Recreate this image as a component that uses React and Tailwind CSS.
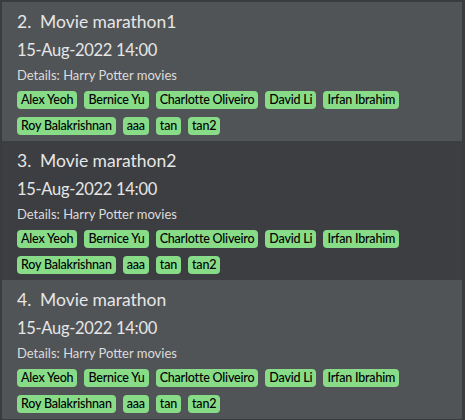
const tags = [
  "Alex Yeoh",
  "Bernice Yu",
  "Charlotte Oliveiro",
  "David Li",
  "Irfan Ibrahim",
  "Roy Balakrishnan",
  "aaa",
  "tan",
  "tan2",
];

const events = [
  { index: 2, name: "Movie marathon1", bg: "bg-[#505457]" },
  { index: 3, name: "Movie marathon2", bg: "bg-[#3c3e41]" },
  { index: 4, name: "Movie marathon", bg: "bg-[#505457]" },
];

function EventCard({ index, name, bg }) {
  return (
    <div className={`${bg} h-[139px] pl-[15px] pt-[9px]`}>
      <div className="flex text-[17.5px] leading-[22px] text-[#e6e6e6]">
        <span className="w-[23px]">{index}.</span>
        <span>{name}</span>
      </div>
      <div className="mt-[6px] text-[16.5px] leading-[22px] tracking-[-0.3px] text-[#e6e6e6]">
        15-Aug-2022 14:00
      </div>
      <div className="mt-[5px] text-[13px] leading-[18px] text-[#dcdcdc]">
        Details: Harry Potter movies
      </div>
      <div className="mt-[7px] flex flex-wrap gap-x-[7px] gap-y-[8px]">
        {tags.map((t) => (
          <span
            key={t}
            className="rounded-[4px] bg-[#88dc88] px-[4px] text-[12.5px] font-medium leading-[18px] tracking-[-0.2px] text-black"
          >
            {t}
          </span>
        ))}
      </div>
    </div>
  );
}

export default function App() {
  return (
    <div
      className="w-[465px] h-[420px] bg-[#3a3b3d] pt-[2px] pl-[2px] pr-[3px]"
      style={{ fontFamily: 'Lato, "Open Sans", sans-serif' }}
    >
      {events.map((e) => (
        <EventCard key={e.index} {...e} />
      ))}
    </div>
  );
}
